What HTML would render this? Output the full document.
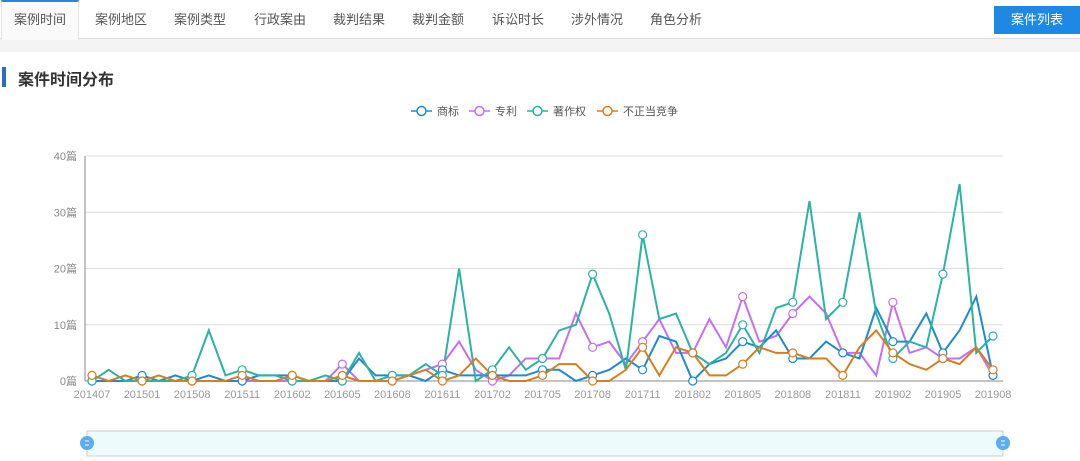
<!DOCTYPE html>
<html><head><meta charset="utf-8"><style>
*{margin:0;padding:0;box-sizing:border-box}
body{width:1080px;height:461px;overflow:hidden;background:#f4f4f4;font-family:"Liberation Sans","Noto Sans CJK SC",sans-serif;position:relative}
.tabs{position:absolute;left:0;top:0;width:1080px;height:39px;background:#fff;border-bottom:1px solid #ddd}
.tab{position:absolute;top:0;height:39px;line-height:40px;font-size:13px;color:#555}
.tab.a{left:1px;width:78px;border-top:2px solid #2a86d6;border-left:1px solid #e4e4e4;border-right:1px solid #e4e4e4;background:#fafafa;text-align:center;height:40px;line-height:36px;color:#555}
.btn{position:absolute;left:994px;top:6px;width:86px;height:28px;background:#1e88e5;color:#fff;font-size:13px;line-height:28px;text-align:center}
.panel{position:absolute;left:0;top:52px;width:1080px;height:409px;background:#fff}
.title{position:absolute;left:18px;top:66px;font-size:16px;font-weight:bold;color:#333}
.bar{position:absolute;left:2px;top:67px;width:4px;height:20px;background:#2a6fb8}
svg{position:absolute;left:0;top:0}
</style></head><body>
<div class="tabs">
<div class="tab a">案例时间</div>
<div class="tab" style="left:95px">案例地区</div>
<div class="tab" style="left:174px">案例类型</div>
<div class="tab" style="left:254px">行政案由</div>
<div class="tab" style="left:333px">裁判结果</div>
<div class="tab" style="left:412px">裁判金额</div>
<div class="tab" style="left:492px">诉讼时长</div>
<div class="tab" style="left:571px">涉外情况</div>
<div class="tab" style="left:650px">角色分析</div>
<div class="btn">案件列表</div>
</div>
<div class="panel"></div>
<div class="bar"></div><div class="title">案件时间分布</div>
<svg id="c" width="1080" height="461" xmlns="http://www.w3.org/2000/svg" font-family="Liberation Sans, Noto Sans CJK SC, sans-serif"></svg>
<script>
var s=document.getElementById('c'),h='';
var x0=92,st=901/54,y0=381,k=5.625;
for(var v=0;v<=40;v+=10){var y=y0-v*k;
 if(v>0)h+='<line x1="85" y1="'+y+'" x2="1003" y2="'+y+'" stroke="#ddd"/>';
 h+='<text x="77" y="'+(y+4)+'" font-size="11" fill="#888" text-anchor="end">'+v+'篇</text>';}
h+='<line x1="85" y1="156" x2="85" y2="381" stroke="#888"/><line x1="85" y1="381" x2="1003" y2="381" stroke="#888"/>';
var L=['201407','201501','201508','201511','201602','201605','201608','201611','201702','201705','201708','201711','201802','201805','201808','201811','201902','201905','201908'];
L.forEach(function(t,i){h+='<text x="'+(x0+i*50.06)+'" y="398" font-size="11" fill="#999" text-anchor="middle">'+t+'</text>';});
var D={
'#2bb3a3':[0,2,0,0,0,0,1,9,1,2,1,1,0,0,1,0,5,0,1,1,3,1,20,0,2,6,2,4,9,10,19,12,2,26,11,12,5,3,5,10,5,13,14,32,11,14,30,12,4,7,6,19,35,5,8],
'#1e8bd0':[0,0,0,1,0,1,0,1,0,0,1,1,1,0,0,0,4,1,1,1,0,2,1,1,1,1,1,2,2,0,1,2,4,2,8,7,0,3,4,7,6,9,4,4,7,5,4,13,7,7,12,5,9,15,1],
'#c66ff0':[0,0,0,0,0,0,0,0,0,0,0,0,0,0,0,3,0,0,0,1,2,3,7,2,0,1,4,4,4,12,6,7,3,7,11,5,5,11,6,15,7,8,12,15,12,5,5,1,14,5,6,4,4,6,1],
'#d67f1e':[1,0,1,0,1,0,0,0,0,1,0,0,1,0,0,1,0,0,0,1,2,0,1,4,1,0,0,1,3,3,0,0,2,6,1,6,5,1,1,3,6,5,5,4,4,1,6,9,5,3,2,4,3,6,2]};
var order=['#c66ff0','#1e8bd0','#2bb3a3','#d67f1e'],circ='';
order.forEach(function(c){var a=D[c],p='';
 a.forEach(function(v,i){var x=x0+i*st,y=y0-v*k;p+=(i?'L':'M')+x.toFixed(1)+' '+y.toFixed(1);
  if(i%3==0)circ+='<circle cx="'+x.toFixed(1)+'" cy="'+y.toFixed(1)+'" r="4" fill="#fff" stroke="'+c+'" stroke-width="1.2"/>';});
 h+='<path d="'+p+'" fill="none" stroke="'+c+'" stroke-width="2"/>';});
h+=circ;
var lg=[['#1e8bd0','商标',411],['#c66ff0','专利',469],['#2bb3a3','著作权',527],['#d67f1e','不正当竞争',597]];
lg.forEach(function(l){var x=l[2];h+='<line x1="'+x+'" y1="111" x2="'+(x+21)+'" y2="111" stroke="'+l[0]+'" stroke-width="1.5"/><circle cx="'+(x+10.5)+'" cy="111" r="4.5" fill="#fff" stroke="'+l[0]+'" stroke-width="1.5"/><text x="'+(x+26)+'" y="115" font-size="11" fill="#555">'+l[1]+'</text>';});
h+='<rect x="87" y="431" width="916" height="25" fill="#eefbfd" stroke="#ccc"/>';
[87,1003].forEach(function(x){h+='<circle cx="'+x+'" cy="443" r="7" fill="#5aaef0"/><line x1="'+(x-2)+'" y1="441" x2="'+(x+2)+'" y2="441" stroke="#fff"/><line x1="'+(x-2)+'" y1="445" x2="'+(x+2)+'" y2="445" stroke="#fff"/>';});
s.innerHTML=h;
</script>
</body></html>
